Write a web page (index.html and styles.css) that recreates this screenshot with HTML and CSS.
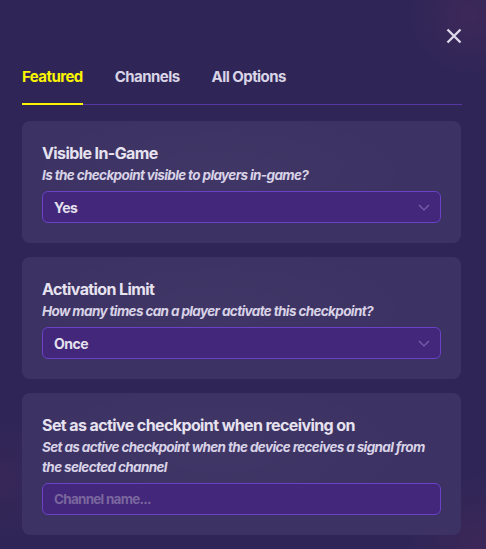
FILE: index.html
```html
<!DOCTYPE html>
<html lang="en">
<head>
<meta charset="utf-8">
<title>Checkpoint options</title>
<link rel="stylesheet" href="styles.css">
</head>
<body>
<div class="modal">
  <div class="close-row">
    <button class="close" aria-label="Close">
      <svg width="16" height="16" viewBox="0 0 16 16"><path d="M1.5 1.5 L14.5 14.5 M14.5 1.5 L1.5 14.5" stroke="#dcd8e8" stroke-width="2.4" stroke-linecap="butt" fill="none"/></svg>
    </button>
  </div>
  <div class="tabs">
    <div class="tab active">Featured</div>
    <div class="tab">Channels</div>
    <div class="tab">All Options</div>
  </div>
  <div class="cards">
    <div class="card">
      <div class="title">Visible In-Game</div>
      <div class="desc">Is the checkpoint visible to players in-game?</div>
      <div class="select"><span>Yes</span>
        <svg class="chev" width="12" height="7" viewBox="0 0 12 7"><path d="M1 1 L6 6 L11 1" stroke="#7a62aa" stroke-width="1.2" fill="none"/></svg>
      </div>
    </div>
    <div class="card">
      <div class="title">Activation Limit</div>
      <div class="desc">How many times can a player activate this checkpoint?</div>
      <div class="select"><span>Once</span>
        <svg class="chev" width="12" height="7" viewBox="0 0 12 7"><path d="M1 1 L6 6 L11 1" stroke="#7a62aa" stroke-width="1.2" fill="none"/></svg>
      </div>
    </div>
    <div class="card">
      <div class="title">Set as active checkpoint when receiving on</div>
      <div class="desc">Set as active checkpoint when the device receives a signal from the selected channel</div>
      <div class="select input"><span class="placeholder">Channel name...</span></div>
    </div>
  </div>
</div>
</body>
</html>
```

FILE: styles.css
```css
* { box-sizing: border-box; }
html, body { margin: 0; height: 100%; }
body {
  background-color: #2f2657;
  background-image:
    radial-gradient(circle at 470px 15px, rgba(120, 50, 100, 0.2), rgba(120,50,100,0) 60px),
    radial-gradient(circle at 480px 545px, rgba(110, 45, 90, 0.2), rgba(110,45,90,0) 70px),
    radial-gradient(circle at 5px 480px, rgba(100, 45, 90, 0.15), rgba(100,45,90,0) 60px);
  font-family: Inter, "Liberation Sans", sans-serif;
  overflow: hidden;
}
.modal {
  padding: 28px 24px 0 22px;
  display: flex;
  flex-direction: column;
}
.close-row {
  display: flex;
  justify-content: flex-end;
  height: 16px;
}
.close {
  width: 16px;
  height: 16px;
  padding: 0;
  border: 0;
  background: none;
  display: block;
}
.close svg { display: block; }
.tabs {
  margin-top: 23px;
  display: flex;
  gap: 32px;
  border-bottom: 1px solid #5637a6;
}
.tab {
  font-size: 15px;
  font-weight: 700;
  line-height: 20px;
  color: #d9d5e6;
  padding-bottom: 16px;
  border-bottom: 2px solid transparent;
  margin-bottom: -1px;
  letter-spacing: -0.55px;
}
.tab.active {
  color: #fbf500;
  border-bottom-color: #fbf500;
}
.cards {
  margin-top: 16px;
  margin-right: 1px;
  display: flex;
  flex-direction: column;
  gap: 14px;
}
.card {
  background: #3c3263;
  background-image: radial-gradient(ellipse at 45% 40%, rgba(255,255,255,0.025), rgba(255,255,255,0) 60%);
  border-radius: 8px;
  padding: 22px 20px 20px 20px;
}
.title {
  font-size: 16px;
  font-weight: 700;
  line-height: 20px;
  color: #e6e2ef;
  letter-spacing: -0.6px;
}
.desc {
  margin-top: 2px;
  font-size: 13.5px;
  font-weight: 700;
  font-style: italic;
  line-height: 20px;
  color: #d8d2e6;
  letter-spacing: -0.63px;
}
.select {
  margin-top: 6px;
  height: 32px;
  border: 1px solid #6a42c6;
  border-radius: 6px;
  background: #42277a;
  display: flex;
  align-items: center;
  justify-content: space-between;
  padding: 0 10px 0 11px;
  font-size: 14px;
  font-weight: 700;
  color: #e4e0ee;
  letter-spacing: -0.5px;
}
.chev { display: block; }
.placeholder {
  color: #7a669e;
  font-size: 13.5px;
  letter-spacing: -0.75px;
}
```
